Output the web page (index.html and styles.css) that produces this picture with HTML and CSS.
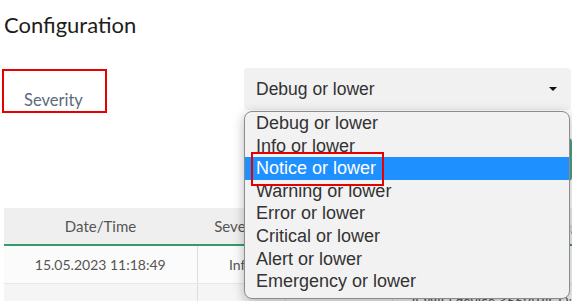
FILE: index.html
```html
<!DOCTYPE html>
<html lang="en">

<head>
  <meta charset="UTF-8">
  <meta name="viewport" content="width=device-width, initial-scale=1.0">
  <title>Configuration</title>
  <link rel="stylesheet" href="styles.css">
</head>

<body>
  <div class="page">
    <h1 class="title">Configuration</h1>

    <div class="form-row">
      <div class="field-label">Severity</div>
      <div class="select-wrap">
        <div class="select">
          <span class="select-value">Debug or lower</span>
          <span class="caret"></span>
        </div>
        <ul class="options">
          <li class="option">Debug or lower</li>
          <li class="option">Info or lower</li>
          <li class="option selected">Notice or lower</li>
          <li class="option">Warning or lower</li>
          <li class="option">Error or lower</li>
          <li class="option">Critical or lower</li>
          <li class="option">Alert or lower</li>
          <li class="option">Emergency or lower</li>
          <li class="mark"></li>
        </ul>
      </div>
    </div>

    <div class="actions">
      <button class="button">Apply</button>
    </div>

    <table class="log-table">
      <thead>
        <tr>
          <th class="col-date">Date/Time</th>
          <th class="col-severity">Severity</th>
          <th class="col-source">Source</th>
          <th class="col-message">Message</th>
        </tr>
      </thead>
      <tbody>
        <tr>
          <td>15.05.2023 11:18:49</td>
          <td>Info</td>
          <td>wifi</td>
          <td class="message">Configuration applied</td>
        </tr>
        <tr class="alt">
          <td></td>
          <td></td>
          <td></td>
          <td class="message">A WiFi device &lt;66:AB:CD:12:34:56&gt; connected</td>
        </tr>
      </tbody>
    </table>
  </div>
</body>

</html>
```

FILE: styles.css
```css
body {
  margin: 0;
  width: 572px;
  height: 301px;
  overflow: hidden;
  background: #fff;
  font-family: Lato, "Open Sans", sans-serif;
  color: #1d1d1b;
}

.page {
  padding-left: 4px;
}

.title {
  margin: 0;
  padding-top: 12px;
  font-size: 22px;
  font-weight: 400;
  line-height: 26px;
  color: #1d1d1b;
}

.form-row {
  display: flex;
  align-items: flex-start;
  margin-top: 30px;
}

.field-label {
  box-sizing: border-box;
  width: 105px;
  height: 44px;
  margin-left: -2px;
  margin-top: 1px;
  padding: 19px 0 0 20px;
  border: 2px solid #e60000;
  font-size: 16.5px;
  line-height: 20px;
  color: #5b6a7d;
}

.select-wrap {
  position: relative;
  margin-left: auto;
  margin-right: 1px;
  width: 327px;
}

.select {
  display: flex;
  align-items: center;
  box-sizing: border-box;
  height: 42px;
  padding: 0 12px;
  border-radius: 4px;
  background: #f1f1f1;
  font-family: "Liberation Sans", Arial, sans-serif;
  font-size: 17.5px;
  color: #333;
}

.caret {
  margin-left: auto;
  margin-right: 2px;
  width: 0;
  height: 0;
  border-left: 4px solid transparent;
  border-right: 4px solid transparent;
  border-top: 4px solid #111;
}

.options {
  position: absolute;
  top: 43px;
  left: 0;
  z-index: 5;
  box-sizing: border-box;
  width: 326px;
  margin: 0;
  padding: 0 0 5px;
  list-style: none;
  border: 1px solid #8c8c8c;
  border-radius: 8px;
  background: #f2f2f2;
  box-shadow: 0 3px 12px rgba(0, 0, 0, 0.28);
  font-family: "Liberation Sans", Arial, sans-serif;
  font-size: 18px;
  color: #333;
}

.option {
  height: 22.6px;
  padding: 0 11px;
  line-height: 22px;
  white-space: nowrap;
}

.option.selected {
  background: #1e90ff;
  color: #fff;
}

.mark {
  position: absolute;
  top: 40px;
  left: 6px;
  box-sizing: border-box;
  width: 133px;
  height: 34px;
  border: 2px solid #e60000;
}

.actions {
  display: flex;
  justify-content: flex-end;
  margin-top: 25px;
}

.button {
  width: 120px;
  height: 43px;
  border: none;
  border-radius: 4px;
  background-color: #4fa37f;
  color: white;
  font-size: 15px;
}

.log-table {
  width: 720px;
  margin-top: 27px;
  border-collapse: collapse;
  table-layout: fixed;
  font-size: 15px;
  color: #555;
}

.log-table th {
  height: 36px;
  padding: 0;
  background: #efefef;
  border-bottom: 2px solid #2f9e6c;
  font-weight: 400;
  text-align: center;
}

.log-table td {
  height: 37px;
  padding: 0;
  background: #fbfbfb;
  border-right: 1px solid #dedede;
  border-bottom: 1px solid #e8e8e8;
  font-size: 14px;
  text-align: center;
}

.log-table .alt td {
  height: 44px;
  background: #f5f5f5;
  vertical-align: top;
  padding-top: 8px;
}

.log-table td.message {
  padding-left: 18px;
  text-align: left;
}

.col-date {
  width: 193px;
}

.col-severity {
  width: 88px;
}

.col-source {
  width: 107px;
}
```
